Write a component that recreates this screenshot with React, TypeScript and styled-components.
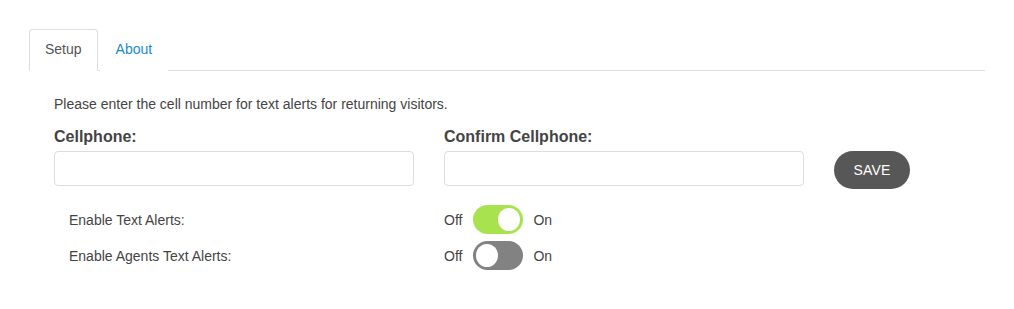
import React from "react";
import styled, { createGlobalStyle } from "styled-components";

const Global = createGlobalStyle`
  html, body { margin: 0; padding: 0; background: #fff; }
  body { font-family: "Liberation Sans", Arial, Helvetica, sans-serif; color: #333; }
  * { box-sizing: border-box; }
`;

const Page = styled.div`
  padding: 29px 29px 0 29px;
  width: 1014px;
`;

const TabBar = styled.div`
  display: flex;
  border-bottom: 1px solid #ddd;
  width: 956px;
`;

const Tab = styled.div<{ $active?: boolean }>`
  font-size: 14px;
  line-height: 19px;
  padding: 10px 15px 11px;
  margin-bottom: -1px;
  margin-right: 2px;
  border: 1px solid ${(p) => (p.$active ? "#ddd" : "transparent")};
  border-bottom-color: ${(p) => (p.$active ? "#fff" : "transparent")};
  border-radius: 4px 4px 0 0;
  background: #fff;
  color: ${(p) => (p.$active ? "#555" : "#1a8bcb")};
`;

const Body = styled.div`
  padding: 25px 0 0 25px;
`;

const Intro = styled.p`
  margin: 0 0 14px;
  font-size: 14px;
  line-height: 17px;
  color: #444;
`;

const FieldRow = styled.div`
  display: flex;
  align-items: flex-end;
  gap: 30px;
`;

const Field = styled.div`
  display: flex;
  flex-direction: column;
  width: 360px;
`;

const Label = styled.label`
  font-weight: bold;
  font-size: 16px;
  line-height: 20px;
  color: #444;
  margin-bottom: 4px;
`;

const Input = styled.input`
  height: 35px;
  width: 100%;
  border: 1px solid #ddd;
  border-radius: 4px;
  padding: 6px 10px;
  font-size: 13px;
  outline: none;
`;

const SaveButton = styled.button`
  margin-bottom: -3px;
  width: 76px;
  height: 38px;
  border: none;
  border-radius: 19px;
  background: #575757;
  color: #fff;
  font-family: "Liberation Sans", Arial, sans-serif;
  font-size: 14px;
  letter-spacing: 0.2px;
`;

const Toggles = styled.div`
  margin-top: 19px;
  display: flex;
  flex-direction: column;
  gap: 7px;
`;

const ToggleRow = styled.div`
  display: flex;
  align-items: center;
  height: 29px;
`;

const ToggleLabel = styled.span`
  width: 390px;
  padding-left: 15px;
  font-size: 14px;
  color: #444;
`;

const StateText = styled.span`
  font-size: 14px;
  color: #444;
`;

const Switch = styled.div<{ $on?: boolean }>`
  position: relative;
  width: 50px;
  height: 29px;
  border-radius: 15px;
  margin: 0 10px 0 11px;
  background: ${(p) => (p.$on ? "#a9e24f" : "#828282")};
`;

const Knob = styled.div<{ $on?: boolean }>`
  position: absolute;
  top: 3px;
  left: ${(p) => (p.$on ? "25px" : "3px")};
  width: 22px;
  height: 23px;
  border-radius: 50%;
  background: #fff;
`;

function Toggle({ label, on }: { label: string; on?: boolean }) {
  return (
    <ToggleRow>
      <ToggleLabel>{label}</ToggleLabel>
      <StateText>Off</StateText>
      <Switch $on={on}>
        <Knob $on={on} />
      </Switch>
      <StateText>On</StateText>
    </ToggleRow>
  );
}

export default function App() {
  return (
    <Page>
      <Global />
      <TabBar>
        <Tab $active>Setup</Tab>
        <Tab>About</Tab>
      </TabBar>
      <Body>
        <Intro>Please enter the cell number for text alerts for returning visitors.</Intro>
        <FieldRow>
          <Field>
            <Label>Cellphone:</Label>
            <Input />
          </Field>
          <Field>
            <Label>Confirm Cellphone:</Label>
            <Input />
          </Field>
          <SaveButton>SAVE</SaveButton>
        </FieldRow>
        <Toggles>
          <Toggle label="Enable Text Alerts:" on />
          <Toggle label="Enable Agents Text Alerts:" />
        </Toggles>
      </Body>
    </Page>
  );
}
